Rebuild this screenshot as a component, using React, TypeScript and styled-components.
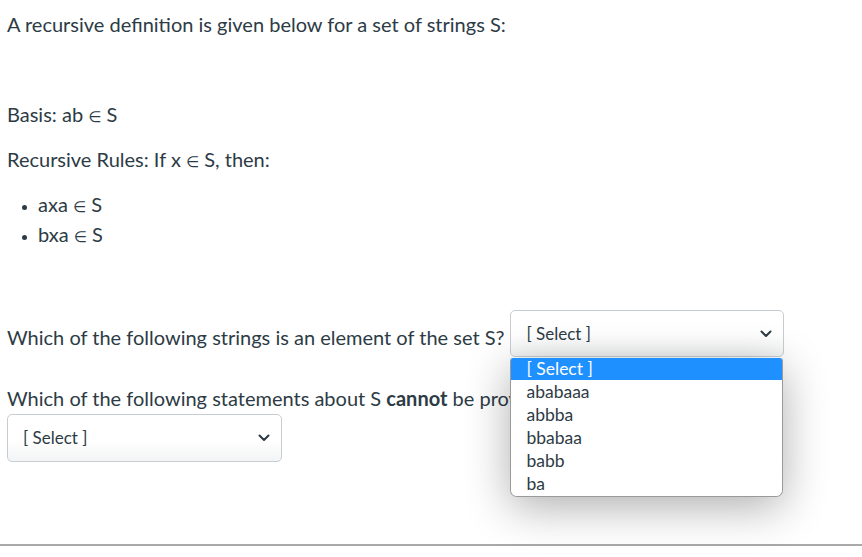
import React from 'react'
import styled, { createGlobalStyle } from 'styled-components'

const GlobalStyle = createGlobalStyle`
  html, body {
    margin: 0;
    padding: 0;
    background: #ffffff;
  }
  body {
    font-family: Lato, "Open Sans", "Liberation Sans", sans-serif;
    color: #2d3b45;
  }
`

const Page = styled.div`
  position: relative;
  width: 862px;
  height: 557px;
  overflow: hidden;
  background: white;
`

const Content = styled.div`
  padding: 9px 7px 0 7px;
  font-size: 20px;
  line-height: 30px;
`

const Para = styled.p<{ $tight?: boolean }>`
  margin: 0 0 ${p => (p.$tight ? 0 : 15)}px 0;
  height: 30px;
`

const Elem = styled.span`
  font-family: "DejaVu Sans", sans-serif;
  font-size: 15px;
  line-height: 1;
`

const List = styled.ul`
  margin: 15px 0 15px 0;
  padding-left: 31px;
  li {
    height: 30px;
    line-height: 30px;
  }
  li::marker {
    font-size: 14px;
  }
`

const QuestionRow = styled.div`
  display: flex;
  align-items: flex-start;
  margin-top: 16px;
`

const QuestionText = styled.span`
  padding-top: 12px;
  white-space: nowrap;
`

const SecondQuestion = styled.div`
  margin-top: 26px;
  height: 30px;
  white-space: nowrap;
`

const SelectBox = styled.div<{ $width: number; $height: number }>`
  display: flex;
  align-items: center;
  justify-content: space-between;
  box-sizing: border-box;
  width: ${p => p.$width}px;
  height: ${p => p.$height}px;
  padding: 0 11px 0 15px;
  border: 1px solid #c7cdd1;
  border-radius: 5px;
  background: linear-gradient(to bottom, #ffffff 0%, #ffffff 55%, #f3f4f5 100%);
  font-size: 17px;
  color: #2d3b45;
`

const SelectWrap = styled.div`
  position: relative;
  margin-left: 6px;
`

const Menu = styled.ul`
  position: absolute;
  top: 48px;
  left: 0;
  width: 273px;
  margin: 0;
  padding: 0;
  list-style: none;
  background: white;
  border: 1px solid #9a9a9a;
  border-top: none;
  border-radius: 3px 3px 7px 7px;
  box-shadow: 0 10px 45px rgba(0, 0, 0, 0.32);
  overflow: hidden;
  z-index: 10;
  box-sizing: border-box;
`

const Option = styled.li<{ $active?: boolean }>`
  height: ${p => (p.$active ? 22 : 23)}px;
  line-height: ${p => (p.$active ? 22 : 23)}px;
  padding-left: 15px;
  font-size: 17.5px;
  background: ${p => (p.$active ? '#1e90ff' : 'white')};
  color: ${p => (p.$active ? 'white' : '#2d3b45')};
  &:last-child {
    height: 24px;
  }
`

const SecondSelect = styled.div`
  margin-top: 1px;
`

const Footer = styled.div`
  position: absolute;
  left: 0;
  right: 0;
  top: 544px;
  border-top: 2px solid #a9a9a9;
`

const Chevron = () => (
  <svg width="12" height="8" viewBox="0 0 12 8">
    <polyline points="1.5,1.5 6,6 10.5,1.5" fill="none" stroke="#2d3b45" strokeWidth="2" strokeLinecap="round" strokeLinejoin="round" />
  </svg>
)

const options = ['ababaaa', 'abbba', 'bbabaa', 'babb', 'ba']

export default function App() {
  return (
    <Page>
      <GlobalStyle />
      <Content>
        <Para>A recursive definition is given below for a set of strings S:</Para>
        <Para>&nbsp;</Para>
        <Para>Basis: ab <Elem>∈</Elem> S</Para>
        <Para $tight>Recursive Rules: If x <Elem>∈</Elem> S, then:</Para>
        <List>
          <li>axa <Elem>∈</Elem> S</li>
          <li>bxa <Elem>∈</Elem> S</li>
        </List>
        <Para $tight>&nbsp;</Para>
        <QuestionRow>
          <QuestionText>Which of the following strings is an element of the set S?</QuestionText>
          <SelectWrap>
            <SelectBox $width={274} $height={47}>
              <span>[ Select ]</span>
              <Chevron />
            </SelectBox>
            <Menu>
              <Option $active>[ Select ]</Option>
              {options.map(o => (
                <Option key={o}>{o}</Option>
              ))}
            </Menu>
          </SelectWrap>
        </QuestionRow>
        <SecondQuestion>
          Which of the following statements about S <b>cannot</b> be proved using this definition?
        </SecondQuestion>
        <SecondSelect>
          <SelectBox $width={275} $height={48}>
            <span>[ Select ]</span>
            <Chevron />
          </SelectBox>
        </SecondSelect>
      </Content>
      <Footer />
    </Page>
  )
}
